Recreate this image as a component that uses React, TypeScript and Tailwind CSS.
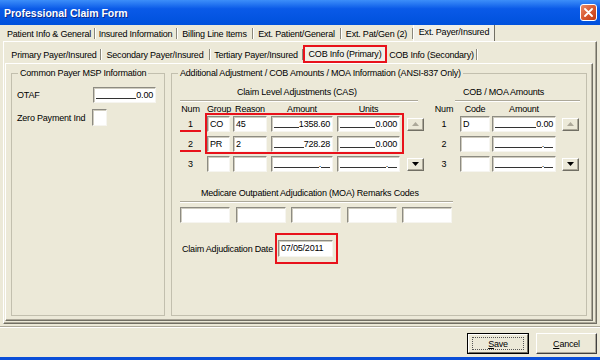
import React from "react";

type Kids = { children?: React.ReactNode };

const sunken =
  "border border-t-[#8d8b82] border-l-[#8d8b82] border-r-[#f6f5f0] border-b-[#f6f5f0] bg-white shadow-[inset_1px_1px_0_#cfccbf]";

const Mask = ({ value }: { value?: string }) => (
  <div className="flex h-full items-end px-[2px] pb-[2px] text-[9px] leading-[9px]">
    <span className="mb-[1px] h-px flex-1 bg-[#333]" />
    {value ? (
      <span>{value}</span>
    ) : (
      <>
        <span>.</span>
        <span className="mb-[1px] h-px w-[9px] bg-[#333]" />
      </>
    )}
  </div>
);

const ArrowBtn = ({ down }: { down?: boolean }) => (
  <div className="flex h-[13px] w-[17px] items-center justify-center border border-t-white border-l-white border-r-[#716f64] border-b-[#716f64] bg-[#ece9d8] shadow-[inset_-1px_-1px_0_#aca899]">
    <svg width="7" height="4" viewBox="0 0 7 4">
      <path d={down ? "M0 0h7L3.5 4z" : "M0 4h7L3.5 0z"} fill={down ? "#000" : "#aca899"} />
    </svg>
  </div>
);

const Tab = ({ w, children }: { w: string } & Kids) => (
  <div className={`${w} flex h-full items-center`}>
    <span className="flex-1 pt-[2px] text-center whitespace-nowrap">{children}</span>
    <span className="h-[11px] w-px bg-[#8a877b] shadow-[1px_0_0_#fff]" />
  </div>
);

const Cell = ({ w, children }: { w: string } & Kids) => (
  <div className={`${sunken} ${w} h-full px-[2px] text-[9px] leading-[14px]`}>{children}</div>
);

const CasRow = ({
  n,
  group,
  reason,
  amount,
  units,
  mark,
  btn,
}: {
  n: string;
  group?: string;
  reason?: string;
  amount?: string;
  units?: string;
  mark?: boolean;
  btn?: "up" | "down";
}) => (
  <div className="flex h-[16px]">
    <div className={`flex h-full w-[21px] items-center justify-center ${mark ? "border-b-2 border-[#e8121b] pt-[2px]" : ""}`}>
      {n}
    </div>
    <div className="ml-[6px] h-full">
      <Cell w="w-[23px]">{group}</Cell>
    </div>
    <div className="ml-[3px] h-full">
      <Cell w="w-[34px]">{reason}</Cell>
    </div>
    <div className={`${sunken} ml-[4px] h-full w-[62px]`}>
      <Mask value={amount} />
    </div>
    <div className={`${sunken} ml-[4px] h-full w-[63px]`}>
      <Mask value={units} />
    </div>
    <div className="ml-[7px] flex h-full w-[17px] items-center">
      {btn === "up" && <ArrowBtn />}
      {btn === "down" && <ArrowBtn down />}
    </div>
  </div>
);

const CobRow = ({ n, code, amount, btn }: { n: string; code?: string; amount?: string; btn?: "up" | "down" }) => (
  <div className="flex h-[16px]">
    <div className="flex h-full w-[20px] items-center justify-center">{n}</div>
    <div className="ml-[6px] h-full">
      <Cell w="w-[30px]">{code}</Cell>
    </div>
    <div className={`${sunken} ml-[2px] h-full w-[64px]`}>
      <Mask value={amount} />
    </div>
    <div className="ml-[6px] flex h-full w-[17px] items-center">
      {btn === "up" && <ArrowBtn />}
      {btn === "down" && <ArrowBtn down />}
    </div>
  </div>
);

export default function App() {
  return (
    <div className="flex h-[360px] w-[600px] flex-col overflow-hidden bg-[#ece9d8] font-['Liberation_Sans',Arial,sans-serif] text-[9px] leading-[10px] tracking-[-0.2px] text-black">
      {/* title bar */}
      <div className="flex h-[25px] shrink-0 items-center justify-between bg-linear-to-b from-[#3c8ef9] via-[#0a5ae8] via-35% to-[#0051dc] pl-[4px] pr-[3px]">
        <span className="text-[10.5px] font-bold leading-[12px] tracking-normal text-white [text-shadow:1px_1px_0_#0b2a8a]">
          Professional Claim Form
        </span>
        <div className="flex h-[17px] w-[17px] items-center justify-center rounded-[3px] border border-white bg-linear-to-br from-[#ea8a66] via-[#d85a32] to-[#c03a12]">
          <svg width="9" height="9" viewBox="0 0 9 9">
            <path d="M1 1l7 7M8 1L1 8" stroke="#fff" strokeWidth="1.8" strokeLinecap="round" />
          </svg>
        </div>
      </div>

      {/* main tabs */}
      <div className="flex h-[16px] shrink-0 items-end pl-[4px]">
        <Tab w="w-[91px]">Patient Info &amp; General</Tab>
        <Tab w="w-[82px]">Insured Information</Tab>
        <Tab w="w-[76px]">Billing Line Items</Tab>
        <Tab w="w-[88px]">Ext. Patient/General</Tab>
        <Tab w="w-[72px]">Ext. Pat/Gen (2)</Tab>
        <div className="flex h-full w-[82px] justify-center border-r border-l border-r-[#716f64] border-l-white bg-[#f1efe6] pt-[2px] whitespace-nowrap">
          Ext. Payer/Insured
        </div>
      </div>

      {/* outer page */}
      <div className="ml-[3px] h-[283px] w-[594px] shrink-0 border border-t-white border-l-white border-r-[#716f64] border-b-[#716f64] pb-[2px] shadow-[inset_-1px_-1px_0_#aca899]">
        {/* sub tabs */}
        <div className="flex h-[21px] items-end pl-[4px]">
          <div className="flex h-[18px] items-center">
            <Tab w="w-[93px]">Primary Payer/Insured</Tab>
            <Tab w="w-[109px]">Secondary Payer/Insured</Tab>
            <Tab w="w-[93px]">Tertiary Payer/Insured</Tab>
            <div className="flex h-full w-[84px] items-center justify-center border-2 border-[#e8121b] bg-[#f1efe6] whitespace-nowrap">
              COB Info (Primary)
            </div>
            <Tab w="w-[90px]">COB Info (Secondary)</Tab>
          </div>
        </div>

        {/* inner page */}
        <div className="ml-[1px] flex h-[258px] w-[588px] gap-[6px] border border-t-white border-l-white border-r-[#716f64] border-b-[#716f64] pt-[4px] pl-[5px] shadow-[inset_-1px_-1px_0_#aca899]">
          {/* left group */}
          <fieldset className="h-[248px] w-[154px] border border-[#c2bfae]">
            <legend className="ml-[6px] px-[2px] leading-[10px]">Common Payer MSP Information</legend>
            <div className="pl-[5px]">
              <div className="mt-[9px] flex h-[16px] items-center">
                <span className="w-[76px]">OTAF</span>
                <div className={`${sunken} h-full w-[63px]`}>
                  <Mask value="0.00" />
                </div>
              </div>
              <div className="mt-[6px] flex h-[17px] items-center">
                <span className="w-[75px]">Zero Payment Ind</span>
                <div className={`${sunken} h-full w-[15px]`} />
              </div>
            </div>
          </fieldset>

          {/* right group */}
          <fieldset className="h-[248px] w-[416px] border border-[#c2bfae]">
            <legend className="ml-[6px] px-[2px] leading-[10px]">
              Additional Adjustment / COB Amounts / MOA Information (ANSI-837 Only)
            </legend>
            <div className="pt-[9px] pl-[8px]">
              <div className="flex">
                {/* CAS */}
                <div className="relative w-[245px]">
                  <div className="h-[10px] pl-[57px]">Claim Level Adjustments (CAS)</div>
                  <div className="mt-[3px] h-px w-[238px] bg-[#aca899] shadow-[0_1px_0_#fff]" />
                  <div className="mt-[3px] flex h-[10px] text-center">
                    <span className="w-[21px]">Num</span>
                    <span className="ml-[6px] w-[23px]">Group</span>
                    <span className="ml-[3px] w-[34px]">Reason</span>
                    <span className="ml-[4px] w-[62px]">Amount</span>
                    <span className="ml-[4px] w-[63px]">Units</span>
                  </div>
                  <div className="mt-[2px] flex flex-col gap-[4px]">
                    <CasRow n="1" group="CO" reason="45" amount="1358.60" units="0.000" mark btn="up" />
                    <CasRow n="2" group="PR" reason="2" amount="728.28" units="0.000" mark />
                    <CasRow n="3" btn="down" />
                  </div>
                  <div className="absolute top-[26px] left-[25px] h-[41px] w-[199px] border-2 border-[#e8121b]" />
                </div>

                {/* COB / MOA */}
                <div className="ml-[9px] w-[146px]">
                  <div className="h-[10px] pl-[29px]">COB / MOA Amounts</div>
                  <div className="mt-[3px] ml-[21px] h-px w-[125px] bg-[#aca899] shadow-[0_1px_0_#fff]" />
                  <div className="mt-[3px] flex h-[10px] text-center">
                    <span className="w-[20px]">Num</span>
                    <span className="ml-[6px] w-[30px]">Code</span>
                    <span className="ml-[2px] w-[64px]">Amount</span>
                  </div>
                  <div className="mt-[2px] flex flex-col gap-[4px]">
                    <CobRow n="1" code="D" amount="0.00" btn="up" />
                    <CobRow n="2" />
                    <CobRow n="3" btn="down" />
                  </div>
                </div>
              </div>

              {/* MOA remarks */}
              <div className="mt-[16px] h-[10px] pl-[21px]">Medicare Outpatient Adjudication (MOA) Remarks Codes</div>
              <div className="mt-[3px] h-px w-[273px] bg-[#aca899] shadow-[0_1px_0_#fff]" />
              <div className="mt-[5px] flex h-[16px] gap-[5.5px]">
                <div className={`${sunken} w-[50px]`} />
                <div className={`${sunken} w-[50px]`} />
                <div className={`${sunken} w-[50px]`} />
                <div className={`${sunken} w-[50px]`} />
                <div className={`${sunken} w-[50px]`} />
              </div>

              <div className="mt-[10px] flex items-center">
                <span className="w-[95px] pl-[2px]">Claim Adjudication Date</span>
                <div className="h-[31px] w-[63px] border-2 border-[#e8121b] pt-[5px] pl-[1px]">
                  <div className={`${sunken} h-[17px] w-[55px] px-[2px] text-[9px] leading-[15px]`}>07/05/2011</div>
                </div>
              </div>
            </div>
          </fieldset>
        </div>
      </div>

      {/* footer */}
      <div className="h-[33px] shrink-0">
        <div className="mt-[2px] h-px bg-[#aca899]" />
        <div className="h-px bg-white" />
        <div className="mt-[5px] flex justify-end gap-[7px] pr-[3px]">
          <div className="h-[21px] w-[62px] border border-black">
            <div className="flex h-full w-full items-center justify-center border border-t-white border-l-white border-r-[#716f64] border-b-[#716f64]">
              <div className="flex h-[13px] w-[52px] items-center justify-center border border-dotted border-[#555]">
                <span>
                  <span className="underline">S</span>ave
                </span>
              </div>
            </div>
          </div>
          <div className="flex h-[21px] w-[61px] items-center justify-center border border-t-white border-l-white border-r-[#404040] border-b-[#404040] shadow-[inset_-1px_-1px_0_#aca899]">
            <span>
              <span className="underline">C</span>ancel
            </span>
          </div>
        </div>
      </div>

      {/* window frame bottom */}
      <div className="h-[3px] shrink-0 bg-[#0a4ed8]" />
    </div>
  );
}
